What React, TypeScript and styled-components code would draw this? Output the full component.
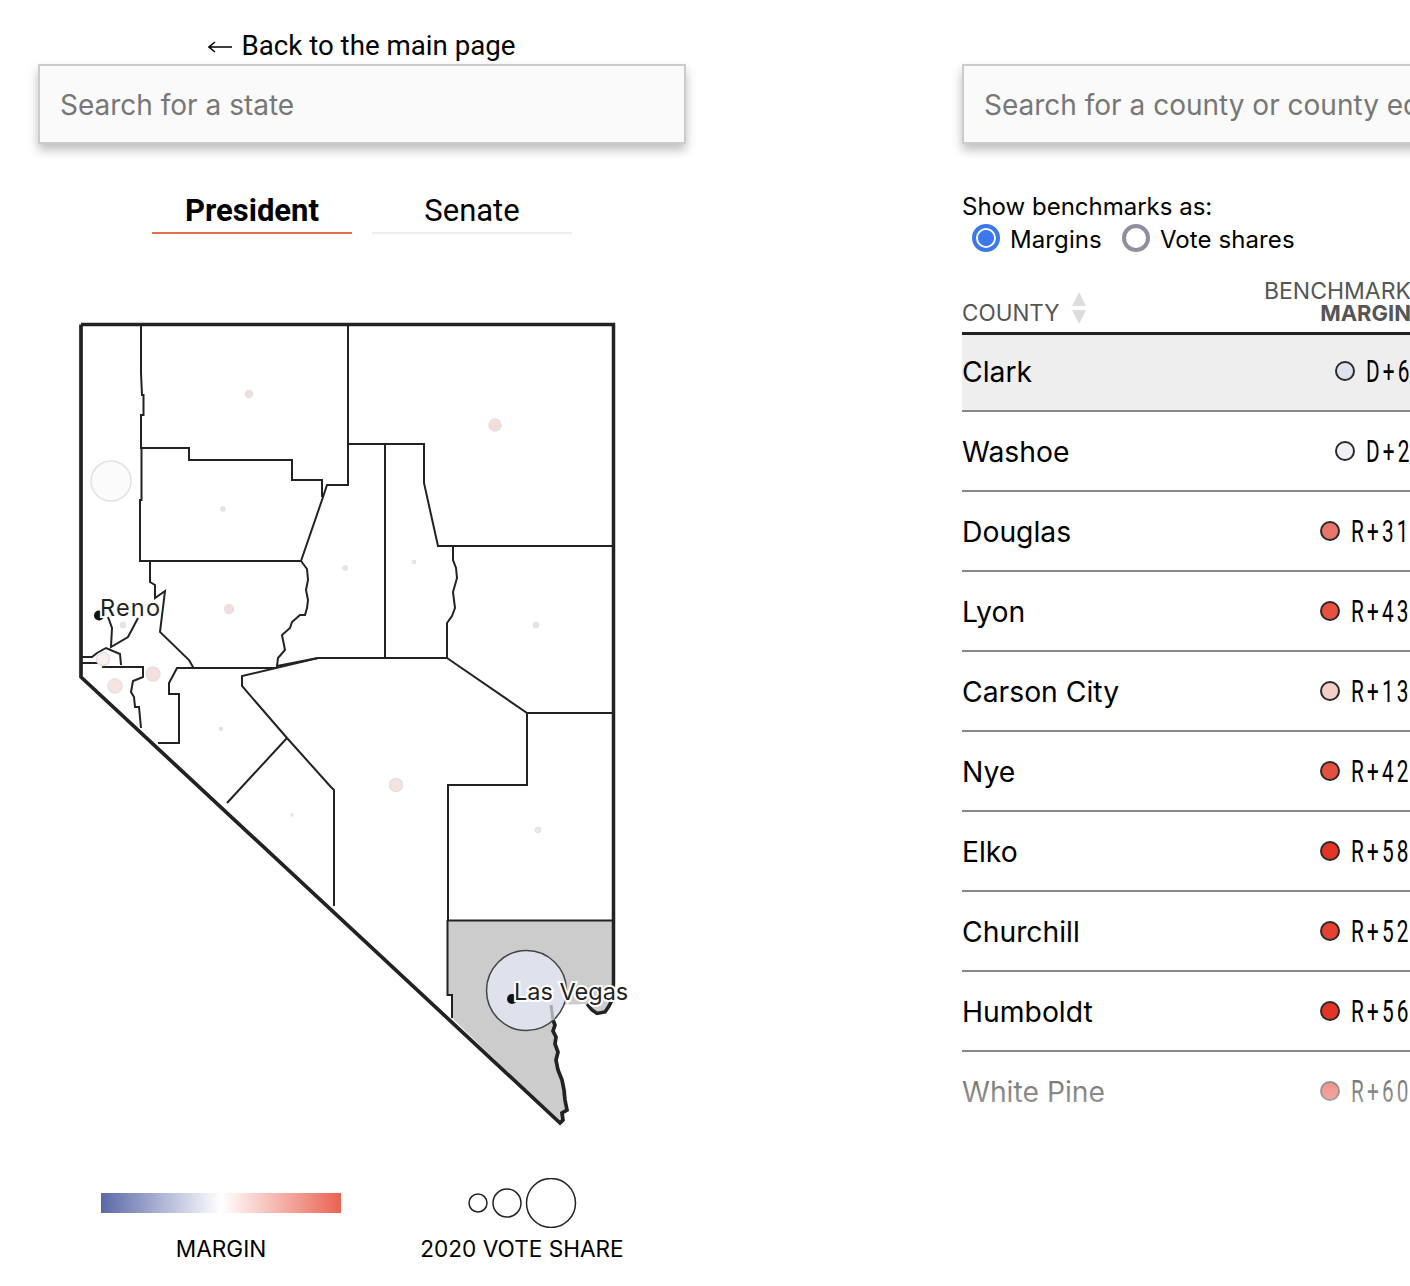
import { FC } from 'react'
import styled, { createGlobalStyle } from 'styled-components'

const GlobalStyle = createGlobalStyle`
html, body {
  margin: 0;
  padding: 0;
  background: #fff;
  overflow: hidden;
}
* { box-sizing: border-box; }
`

const Page = styled.div`
  width: 1410px;
  height: 1286px;
  overflow: hidden;
  display: grid;
  grid-template-columns: 648px 648px;
  column-gap: 276px;
  padding: 28px 0 0 38px;
  color: #000;
  font-family: Inter, "Liberation Sans", sans-serif;
`
const LeftColumn = styled.div`
  display: flex;
  flex-direction: column;
  font-family: Roboto, "Liberation Sans", sans-serif;
`
const RightColumn = styled.div`
  display: flex;
  flex-direction: column;
  padding-top: 36px;
`
const BackLink = styled.a`
  display: flex;
  justify-content: center;
  gap: 8px;
  height: 36px;
  line-height: 36px;
  font-size: 27.700px;
  color: #000;
`
const BackArrow = styled.svg`
  display: block;
  width: 25px;
  height: 36px;
`
const SearchInput = styled.input`
  display: block;
  width: 648px;
  height: 80px;
  flex: none;
  padding: 2px 20px 0;
  border: 2px solid #ccc;
  background: #fafafa;
  box-shadow: 0 6px 10px rgba(0, 0, 0, 0.26);
  font-family: Inter, "Liberation Sans", sans-serif;
  font-size: 28px;
  outline: none;
  &::placeholder { color: #777; opacity: 1; }
`
const Tabs = styled.div`
  display: flex;
  justify-content: center;
  gap: 20px;
  margin-top: 48px;
`
const Tab = styled.button<{ $active?: boolean }>`
  width: 200px;
  height: 42px;
  padding: 0 0 8px;
  border: 0;
  border-bottom: 2px solid ${p => (p.$active ? '#e0724c' : '#eee')};
  background: none;
  color: #000;
  font-family: inherit;
  font-size: 31px;
  font-weight: ${p => (p.$active ? 700 : 400)};
`
const MapSvg = styled.svg`
  display: block;
  flex: none;
  width: 648px;
  height: 850px;
  margin-top: 66px;
`
const CityLabel = styled.text`
  font-family: Inter, "Liberation Sans", sans-serif;
  font-size: 23.500px;
  fill: #222;
  stroke: #fff;
  stroke-width: 4px;
  paint-order: stroke;
`
const Legend = styled.div`
  display: grid;
  grid-template-columns: 240px 240px;
  column-gap: 61px;
  margin: 28px 0 0 63px;
`
const LegendItem = styled.div`
  display: flex;
  flex-direction: column;
  align-items: center;
`
const LegendGraphic = styled.div`
  width: 100%;
  height: 50px;
  display: flex;
  align-items: center;
  justify-content: center;
`
const GradientBar = styled.div`
  width: 240px;
  height: 20px;
  background: linear-gradient(to right, #5b68a8, #ffffff 50%, #ea6353);
`
const LegendLabel = styled.div`
  margin-top: 8px;
  white-space: nowrap;
  font-family: Inter, "Liberation Sans", sans-serif;
  font-size: 22.600px;
  line-height: 26px;
`
const Options = styled.div`
  margin-top: 48px;
  font-size: 24px;
`
const OptionsTitle = styled.div`
  height: 30px;
  line-height: 30px;
`
const RadioRow = styled.div`
  display: flex;
  height: 35px;
  padding-left: 10px;
  gap: 20px;
  align-items: center;
`
const RadioOption = styled.label`
  display: flex;
  align-items: center;
  gap: 10px;
  letter-spacing: 0.100px;
`
const RadioMark = styled.span<{ $checked?: boolean }>`
  width: 28px;
  height: 28px;
  margin-top: -3px;
  border-radius: 50%;
  border: 4px solid ${p => (p.$checked ? '#3b78f0' : '#8f8f9f')};
  background: ${p => (p.$checked ? 'radial-gradient(circle, #3b78f0 0 7.500px, #fff 8.500px)' : '#fff')};
`
const TableHead = styled.div`
  position: relative;
  z-index: 1;
  display: flex;
  justify-content: space-between;
  align-items: flex-end;
  height: 65px;
  margin: 13px 0 -3px;
  padding: 0 199px 8px 0;
  border-bottom: 3px solid #222;
  color: #555;
  font-size: 23px;
  line-height: 22px;
`
const SortCell = styled.div`
  display: flex;
  align-items: flex-end;
  gap: 11px;
  font-size: 22.500px;
`
const SortArrows = styled.svg`
  display: block;
  width: 16px;
  height: 32px;
  margin-bottom: 0;
`
const BenchmarkHead = styled.div`
  text-align: right;
  white-space: nowrap;
  b { display: block; font-size: 22px; font-weight: 700; }
`
const RowList = styled.div`
  position: relative;
  height: 784px;
  overflow: hidden;
  &::after {
    content: '';
    position: absolute;
    left: 0;
    right: 0;
    bottom: 0;
    height: 46px;
    background: linear-gradient(rgba(255, 255, 255, 0.42), rgba(255, 255, 255, 0.65));
  }
`
const Row = styled.div<{ $selected?: boolean }>`
  display: flex;
  justify-content: space-between;
  align-items: center;
  height: 80px;
  padding: 2px 199px 0 0;
  border-bottom: 2px solid #888;
  background: ${p => (p.$selected ? '#eee' : '#fff')};
  font-size: 28.300px;
`
const Benchmark = styled.div`
  display: flex;
  align-items: center;
  gap: 11px;
`
const Dot = styled.span<{ $color: string }>`
  width: 20px;
  height: 20px;
  margin-top: -3px;
  border-radius: 50%;
  border: 2px solid #2a2a2a;
  background: ${p => p.$color};
`
const Value = styled.span<{ $chars: number }>`
  display: block;
  width: ${p => p.$chars * 15}px;
  margin-top: -1px;
  white-space: nowrap;
  font-family: Roboto, "Liberation Sans", sans-serif;
  font-size: 31px;
  letter-spacing: 4.700px;
  transform: scaleX(0.67);
  transform-origin: left center;
`

type County = { name: string; value: string; color: string }
const counties: County[] = [
  { name: 'Clark', value: 'D+6', color: '#dfe1ec' },
  { name: 'Washoe', value: 'D+2', color: '#f0f1f6' },
  { name: 'Douglas', value: 'R+31', color: '#e8746a' },
  { name: 'Lyon', value: 'R+43', color: '#e8503f' },
  { name: 'Carson City', value: 'R+13', color: '#f6cdc7' },
  { name: 'Nye', value: 'R+42', color: '#e4503f' },
  { name: 'Elko', value: 'R+58', color: '#e33425' },
  { name: 'Churchill', value: 'R+52', color: '#e54030' },
  { name: 'Humboldt', value: 'R+56', color: '#e33526' },
  { name: 'White Pine', value: 'R+60', color: '#e33020' },
]

const clarkShape =
  'M447.500 920.500H612.700V983L612 998L608 1006L605 1012L597 1013.500L592 1010L587 1004L551 1005L553 1020L555 1027L555 1036L557 1050L557 1070L562 1080L565 1100L567 1110L562 1113L563 1120L560 1123L452 1018V995H447.500Z'

const countyLines = [
  'M141 324V373L142 395H143.500V415H141V448H189V460H292V480H322V497',
  'M348 324V485H327L322 500L301 561',
  'M141.500 448V500H140V561H301',
  'M150 561L150 582L155 585L155 598L165 591L160 632L189 660L193 667V668H277',
  'M301 561L307 569L308 580L306 590L308 600L307 608L305 615L300 615L292 622L290 628L282 635L285 650L278 658L277 666L318 658H447',
  'M318 658L242 676V686L287 738L330 786L334 790V906',
  'M447 658L527 713V785H448V920',
  'M527 713H612',
  'M193 668H177L169 683V694H179V743H158',
  'M108 617L112 628L111 647L128 637L138 618',
  'M82 657H92L97 653L106 648L120 654L121 665',
  'M82 663H102L103 667H143V677L133 681L131 692L134 697L135 707H139L141 728',
  'M287 738L227 803',
  'M385 444V658',
  'M348 444H424V483L438 546H612',
  'M453 547V560L456 568L457 578L453 592L455 608L452 616L447 623V658',
  'M447.500 920.500H612',
  'M447.500 920V995H452V1018',
]

const bubbles = [
  { x: 495, y: 425, r: 6, fill: '#f6dcd9' },
  { x: 249, y: 394, r: 3.500, fill: '#f6dcd9' },
  { x: 111, y: 481, r: 20, fill: '#fbfbfb' },
  { x: 223, y: 509, r: 2, fill: '#f2dedd' },
  { x: 345, y: 568, r: 2, fill: '#f2dedd' },
  { x: 414, y: 562, r: 1.500, fill: '#ececec' },
  { x: 536, y: 625, r: 2.500, fill: '#f2dedd' },
  { x: 229, y: 609, r: 4.500, fill: '#f6dcd9' },
  { x: 123, y: 625, r: 2.500, fill: '#f2e2e2' },
  { x: 103, y: 659, r: 6.500, fill: '#fbf0ee' },
  { x: 115, y: 686, r: 7, fill: '#f8e3e0' },
  { x: 153, y: 674, r: 7, fill: '#f6dfdc' },
  { x: 221, y: 729, r: 1.500, fill: '#f2dede' },
  { x: 292, y: 815, r: 1, fill: '#e8e8e8' },
  { x: 396, y: 785, r: 6.500, fill: '#f6e2de' },
  { x: 538, y: 830, r: 2.500, fill: '#ececec' },
]

const NevadaMap: FC = () => (
  <MapSvg viewBox="38 300 648 850">
    <path d={clarkShape} fill="#ccc" />
    <g fill="none" stroke="#222" strokeWidth="2">
      {countyLines.map(d => <path key={d} d={d} />)}
    </g>
    <path
      d="M81 324.500H613.500V983L613 998L609 1006L605 1012L597 1013.500L592 1010L587 1004"
      fill="none" stroke="#222" strokeWidth="3.500"
    />
    <path
      d="M553 1020L555 1025L553 1031L556 1037L555 1044L558 1052L556 1060L558 1070L562 1080L564 1090L565 1100L567 1110L562 1113L563 1120L560 1123L81 677V324.500"
      fill="none" stroke="#222" strokeWidth="3.700"
    />
    {bubbles.map(b => (
      <circle key={`${b.x}-${b.y}`} cx={b.x} cy={b.y} r={b.r} fill={b.fill} stroke="#e2e2e2" strokeWidth="1.500" />
    ))}
    <circle cx="526.500" cy="990.500" r="40" fill="#dfe1ec" stroke="#444" strokeWidth="1.500" />
    <path d="M551 1005L553 1020" fill="none" stroke="#aaa" strokeWidth="3" />
    <circle cx="99" cy="615.500" r="5" fill="#111" />
    <CityLabel x="100" y="616" textLength="60">Reno</CityLabel>
    <circle cx="512" cy="999" r="5" fill="#111" />
    <CityLabel x="514" y="1000">Las Vegas</CityLabel>
  </MapSvg>
)

const App: FC = () => (
  <Page>
    <GlobalStyle />
    <LeftColumn>
      <BackLink>
        <BackArrow viewBox="0 0 25 36">
          <path d="M1 19H24M7 14L1 19L7 24" fill="none" stroke="#000" strokeWidth="1.500" />
        </BackArrow>
        Back to the main page
      </BackLink>
      <SearchInput placeholder="Search for a state" readOnly />
      <Tabs>
        <Tab $active>President</Tab>
        <Tab>Senate</Tab>
      </Tabs>
      <NevadaMap />
      <Legend>
        <LegendItem>
          <LegendGraphic><GradientBar /></LegendGraphic>
          <LegendLabel>MARGIN</LegendLabel>
        </LegendItem>
        <LegendItem>
          <LegendGraphic>
            <svg width="116" height="50" viewBox="0 0 116 50">
              <g fill="none" stroke="#222" strokeWidth="1.500">
                <circle cx="14" cy="25" r="9" />
                <circle cx="43" cy="25" r="14" />
                <circle cx="87" cy="25" r="24.500" />
              </g>
            </svg>
          </LegendGraphic>
          <LegendLabel>2020 VOTE SHARE</LegendLabel>
        </LegendItem>
      </Legend>
    </LeftColumn>
    <RightColumn>
      <SearchInput placeholder="Search for a county or county equivalent" readOnly />
      <Options>
        <OptionsTitle>Show benchmarks as:</OptionsTitle>
        <RadioRow>
          <RadioOption><RadioMark $checked />Margins</RadioOption>
          <RadioOption><RadioMark />Vote shares</RadioOption>
        </RadioRow>
      </Options>
      <TableHead>
        <SortCell>
          COUNTY
          <SortArrows viewBox="0 0 16 32">
            <path d="M8 0L15 14H1Z M1 18H15L8 32Z" fill="#ddd" />
          </SortArrows>
        </SortCell>
        <BenchmarkHead>BENCHMARK<b>MARGIN</b></BenchmarkHead>
      </TableHead>
      <RowList>
        {counties.map((c, i) => (
          <Row key={c.name} $selected={i === 0}>
            {c.name}
            <Benchmark>
              <Dot $color={c.color} />
              <Value $chars={c.value.length}>{c.value}</Value>
            </Benchmark>
          </Row>
        ))}
      </RowList>
    </RightColumn>
  </Page>
)

export default App
